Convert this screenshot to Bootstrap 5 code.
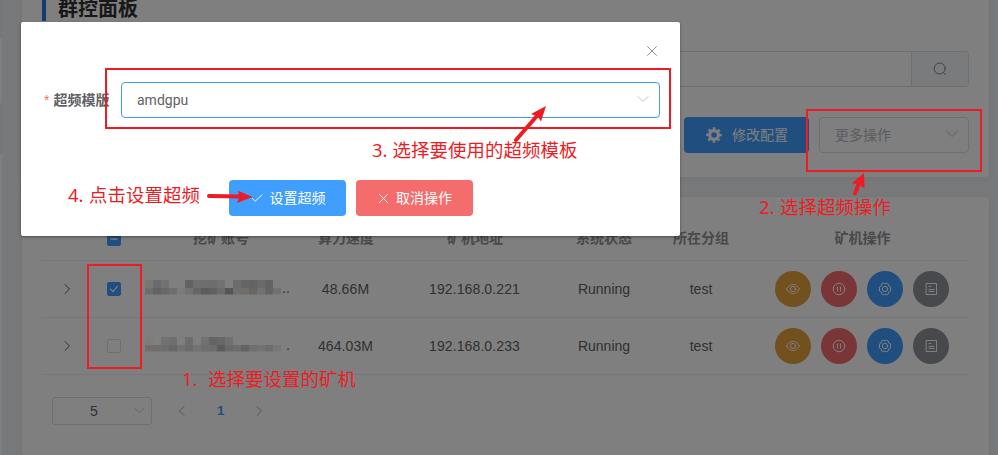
<!DOCTYPE html>
<html lang="zh-CN">
<head>
<meta charset="utf-8">
<meta name="viewport" content="width=device-width, initial-scale=1">
<title>群控面板</title>
<link href="https://cdn.jsdelivr.net/npm/bootstrap@5.3.0/dist/css/bootstrap.min.css" rel="stylesheet">
<style>
  body { font: 14px/1.5 "Liberation Sans", "Noto Sans CJK SC", sans-serif; color: #606266; background: #f0f2f5; }
  .shell { width: 998px; height: 455px; }
  .rail { width: 2px; background: #fff; flex: none; }
  .rail i { display: block; background: #e4f0fd; }
  .rail i:first-child { height: 38px; margin-bottom: 65px; }
  .rail i:last-child { height: 51px; }
  .main { margin: -27px 9px 0 20px; width: 967px; gap: 20px; }
  .panel { background: #fff; border-radius: 4px; padding: 20px; box-shadow: 0 1px 8px rgba(0,0,0,.05); }
  .panel-top { height: 204px; padding-top: 24px; flex: none; }
  .panel-list { height: 300px; flex: none; }
  .title { height: 24px; border-left: 4px solid #2a76e6; padding-left: 12px; font-size: 20px; line-height: 24px; font-weight: 700; color: #303133; margin: 0 0 30px; }
  .box { border: 1px solid #dcdfe6; border-radius: 4px; height: 36px; }
  .search { margin-bottom: 30px; }
  .search .append { width: 57px; background: #f5f7fa; border-left: 1px solid #dcdfe6; }
  .cfg { width: 125px; height: 36px; background: #409eff; color: #fff; border-radius: 4px; gap: 10px; padding-left: 1px; }
  .more { width: 150px; padding: 0 10px 0 15px; color: #b4b8bf; }
  .box .ico { margin-bottom: 2px; }
  .ico { display: block; fill: none; stroke: currentColor; stroke-width: 1; stroke-linecap: round; stroke-linejoin: round; }
  .hosts { table-layout: fixed; width: 927px; margin: 0; text-align: center; color: #606266; --bs-table-bg: transparent; }
  .hosts > :not(caption) > * > * { padding: 0; vertical-align: middle; color: #606266; border-bottom: 1px solid #ebeef5; box-shadow: none; }
  .hosts thead > tr > th { height: 43px; font-weight: 700; color: #909399; padding-top: 1px; }
  .hosts tbody > tr > td { height: 57px; padding-top: 1px; }
  .hosts tbody > tr > .num { letter-spacing: .1px; padding-right: 1px; }
  .hosts tr > :nth-child(2) { padding-right: 2px !important; }
  .tick { width: 14px; height: 14px; border: 1px solid #dcdfe6; border-radius: 2px; margin: 0 auto; }
  .tick.on { background: #409eff; border-color: #409eff; color: #fff; }
  .op { width: 36px; height: 36px; border-radius: 50%; color: #fff; }
  .op-view { background: #e6a23c; } .op-stop { background: #f56c6c; } .op-set { background: #409eff; } .op-log { background: #909399; }
  .hosts tbody > tr > td.masked { padding: 0 0 0 7px; }
  .hosts tbody > tr > td.ops { padding: 0 2px 0 0; }
  .pager { margin: 22px 0 0 10px; font-size: 13px; }
  .pager b { margin: 0 28px 0 29px; padding-top: 2px; color: #409eff; font-size: 13.500px; }
  .pager .ico { color: #a5a8ae; }
  .pager .first { margin-left: 24px; }
  .size { width: 100px; height: 28px; border-radius: 3px; padding: 1px 6px 0 37px; font-size: 14px; }
  .pager .size .ico { color: #c0c4cc; }
  .veil { position: absolute; inset: 0; background: rgba(0,0,0,.5); }
  .sheet { position: absolute; left: 21px; top: 22px; width: 659px; height: 214px; background: #fff; border-radius: 2px; box-shadow: 0 1px 3px rgba(0,0,0,.4); padding: 23px 20px 20px 23px; }
  .close-row { height: 10px; margin-bottom: 27px; color: #909399; padding-right: 2px; }
  .field-name { width: 77px; font-weight: 700; color: #606266; white-space: nowrap; }
  .field-name b { color: #f56c6c; font-weight: 400; margin-right: 4px; }
  .picked { border-color: #409eff; padding: 0 10px 0 15px; color: #606266; }
  .picked span { font: 14px/20px Roboto, sans-serif; }
  .picked .ico { color: #c0c4cc; }
  .acts { margin: 62px 0 0 185px; gap: 10px; }
  .act { width: 117px; height: 36px; border-radius: 4px; color: #fff; gap: 7px; padding-left: 1px; }
  .notes { position: absolute; left: 0; top: 0; }
  .notes text { font: 18.4px "Noto Sans", "Noto Sans CJK SC", sans-serif; fill: #ed1c24; }
</style>
<script src="https://cdn.jsdelivr.net/npm/bootstrap@5.3.0/dist/js/bootstrap.bundle.min.js"></script>
</head>
<body class="overflow-hidden">
<svg width="0" height="0" class="position-absolute">
  <defs>
    <symbol id="down" viewBox="0 0 12 12"><path d="M1 3.5l5 5 5-5"/></symbol>
    <symbol id="right" viewBox="0 0 12 12"><path d="M4 1.5l4.5 4.5L4 10.500"/></symbol>
    <symbol id="left" viewBox="0 0 12 12"><path d="M8 1.500L3.500 6 8 10.500"/></symbol>
    <symbol id="cross" viewBox="0 0 12 12"><path d="M1.500 1.500l9 9M10.500 1.500l-9 9"/></symbol>
    <symbol id="eye" viewBox="0 0 14 14"><path d="M.5 7C3 3.200 5 2.500 7 2.500S11 3.200 13.500 7C11 10.800 9 11.500 7 11.500S3 10.800.5 7z"/><circle cx="7" cy="7" r="2.600"/></symbol>
    <symbol id="pause" viewBox="0 0 14 14"><circle cx="7" cy="7" r="5.800"/><path d="M5.500 5v4M8.500 5v4"/></symbol>
    <symbol id="gear" viewBox="0 0 14 14"><path d="M5.300 1.200L7 1.900l1.700-.7 1.600.9.300 1.800 1.600.7.700 1.400-.8 1 .8 1-.7 1.400-1.600.7-.3 1.800-1.600.9L7 12.100l-1.700.7-1.600-.9-.3-1.800-1.600-.7L1.100 8l.8-1-.8-1 .7-1.400 1.600-.7.3-1.800z"/><circle cx="7" cy="7" r="2.700"/></symbol>
    <symbol id="doc" viewBox="0 0 14 14"><path d="M2.500 1.500h10v11h-10zM5 4.500h2M5 7.500h5M5 9.500h5"/></symbol>
  </defs>
</svg>
<div class="shell position-relative overflow-hidden">
  <div class="d-flex h-100">
    <aside class="rail"><i></i><i></i></aside>
    <main class="main d-flex flex-column">
      <section class="panel panel-top">
        <h1 class="title">群控面板</h1>
        <div class="box search d-flex overflow-hidden">
          <div class="flex-grow-1"></div>
          <div class="append d-flex align-items-center justify-content-center">
            <svg class="ico m-0" width="14" height="14" viewBox="0 0 14 14" color="#808389"><circle cx="6.700" cy="6.500" r="5.500"/><path d="M10.500 10.500l2 2"/></svg>
          </div>
        </div>
        <div class="d-flex justify-content-end" style="gap:10px">
          <div class="cfg d-flex align-items-center justify-content-center">
            <svg width="16" height="16" viewBox="0 0 16 16" fill="none" stroke="#fff"><circle cx="8" cy="8" r="4.400" stroke-width="3.200"/><circle cx="8" cy="8" r="6.700" stroke-width="2.200" stroke-dasharray="2.600 2.662" stroke-dashoffset="1.300"/></svg>
            <span>修改配置</span>
          </div>
          <div class="box more d-flex align-items-center justify-content-between"><span>更多操作</span><svg class="ico" width="12" height="12"><use href="#down"/></svg></div>
        </div>
      </section>
      <section class="panel panel-list">
        <table class="table hosts">
          <colgroup><col style="width:50px"><col style="width:46px"><col style="width:166px"><col style="width:84px"><col style="width:174px"><col style="width:84px"><col style="width:110px"><col style="width:213px"></colgroup>
          <thead><tr>
            <th></th>
            <th><div class="tick on"><svg class="ico" width="12" height="12" viewBox="0 0 12 12"><path d="M3 6h6" stroke-width="1.500"/></svg></div></th>
            <th>挖矿账号</th><th>算力速度</th><th>矿机地址</th><th>系统状态</th><th>所在分组</th><th>矿机操作</th>
          </tr></thead>
          <tbody>
          <tr>
            <td><svg class="ico mx-auto" width="12" height="12"><use href="#right"/></svg></td>
            <td><div class="tick on"><svg class="ico" width="12" height="12" viewBox="0 0 12 12"><path d="M2.500 6.200l2.500 2.500 4.500-5.500" stroke-width="1.200"/></svg></div></td>
            <td class="masked"><div class="d-flex align-items-end"><svg class="mosaic" width="137" height="19" data-top="f4efe6 d6d8da e8e4e0 - - c4c4c2 e0dedc dcdcdc d8dadc e4e4e4 - d8dade cacacc c2c6ca d8d2ce c6c6c8" data-low="dcdad6 c2c6c8 d0d0d0 dcdee0 f6f6f6 e4e4e4 d0cdca bdb9b8 c2c2c6 d6d6d6 aaacb4 dedede e0dbd7 cecdca e4e4e4 c8c8c8 dbe3e8"></svg><span>..</span></div></td>
            <td class="num">48.66M</td><td class="num">192.168.0.221</td><td>Running</td><td>test</td>
            <td class="ops"></td>
          </tr>
          <tr>
            <td><svg class="ico mx-auto" width="12" height="12"><use href="#right"/></svg></td>
            <td><div class="tick"></div></td>
            <td class="masked"><div class="d-flex align-items-end"><svg class="mosaic" width="141" height="19" data-top="fcf8f4 - e2e4e6 e0dedc - dadada - e2e4e6 c8c8c8 cecece e0e0e0" data-low="e4dbd5 e0dbd6 dadae0 cfcfcf e4e4e4 ced6da e6e6e6 dadcde d8d8dc b9b9b9 d2d2d2 dedad6 c2c8ca dedede e4e6ee dedbd7 ebedee"></svg><span>.</span></div></td>
            <td class="num">464.03M</td><td class="num">192.168.0.233</td><td>Running</td><td>test</td>
            <td class="ops"></td>
          </tr>
          </tbody>
        </table>
        <div class="pager d-flex align-items-center">
          <div class="box size d-flex align-items-center justify-content-between"><span>5</span><svg class="ico" width="11" height="11"><use href="#down"/></svg></div>
          <svg class="ico first" width="12" height="12"><use href="#left"/></svg>
          <b>1</b>
          <svg class="ico" width="12" height="12"><use href="#right"/></svg>
        </div>
      </section>
    </main>
  </div>
  <div class="veil"></div>
  <div class="sheet">
    <div class="close-row d-flex justify-content-end"><svg class="ico" width="12" height="12"><use href="#cross"/></svg></div>
    <div class="d-flex align-items-center">
      <div class="field-name"><b>*</b>超频模版</div>
      <div class="box picked flex-grow-1 d-flex align-items-center justify-content-between"><span>amdgpu</span><svg class="ico" width="12" height="12"><use href="#down"/></svg></div>
    </div>
    <div class="acts d-flex">
      <div class="act op-set d-flex align-items-center justify-content-center"><svg class="ico" width="12" height="12" viewBox="0 0 13 12"><path d="M1.500 6.500l3 3L12 2.500"/></svg><span>设置超频</span></div>
      <div class="act op-stop d-flex align-items-center justify-content-center"><svg class="ico" width="11" height="11"><use href="#cross"/></svg><span>取消操作</span></div>
    </div>
  </div>
  <svg class="notes" width="998" height="455">
    <g fill="none" stroke="#ed1c24" stroke-width="2">
      <rect x="106" y="69" width="564" height="59"/><rect x="807" y="110" width="174" height="61"/><rect x="88" y="265" width="53" height="103"/>
    </g>
    <g stroke="#ed1c24" stroke-width="4" stroke-linecap="round"><path d="M516 140l20-23M855 193.500l4-10M209 196l32 .6"/></g>
    <g fill="#ed1c24"><path d="M546 106l-5 15.500-3.500-5-6.500-2.500zM864 173l.5 15.500-5-3.500-7.500-2zM252.500 197L237 203l2.500-6.300-1.500-6z"/></g>
    <text x="182" y="386">1.</text><text x="208" y="386" textLength="148">选择要设置的矿机</text>
    <text x="759" y="214">2.</text><text x="780" y="214" textLength="111">选择超频操作</text>
    <text x="372" y="157">3.</text><text x="392.500" y="157" textLength="185">选择要使用的超频模板</text>
    <text x="68" y="202">4.</text><text x="89" y="202" textLength="111">点击设置超频</text>
  </svg>
</div>
<script>
  // Action buttons are identical for every host.
  document.querySelectorAll('.ops').forEach(td => {
    td.innerHTML = '<div class="d-flex justify-content-center" style="gap:10px">' +
      [['view', 'eye'], ['stop', 'pause'], ['set', 'gear'], ['log', 'doc']].map(([c, i]) =>
        `<span class="op op-${c} d-flex align-items-center justify-content-center"><svg class="ico" width="14" height="14"><use href="#${i}"/></svg></span>`).join('') + '</div>';
  });
  // Account names are hidden behind 8px colour blocks.
  document.querySelectorAll('.mosaic').forEach(svg => {
    const row = (s, y, h) => s.split(' ').map((c, i) => c === '-' ? '' : `<rect x="${i * 8}" y="${y}" width="8" height="${h}" fill="#${c}"/>`).join('');
    svg.innerHTML = row(svg.dataset.top, 0, 8) + row(svg.dataset.low, 8, 6.5);
  });
</script>
</body>
</html>
